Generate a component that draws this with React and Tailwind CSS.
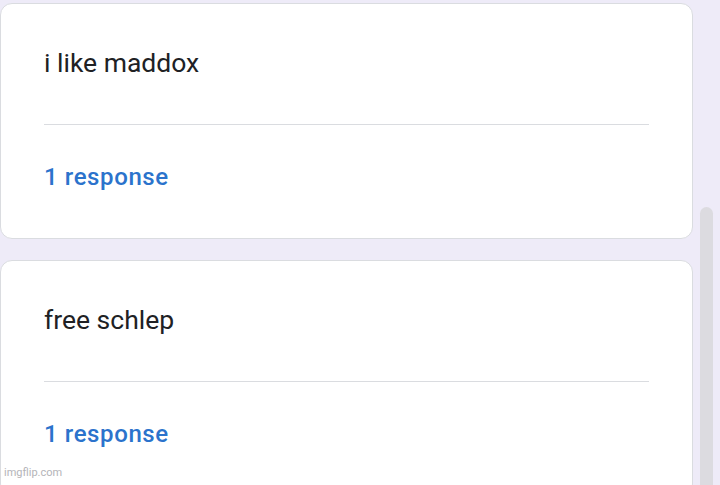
const questions = [
  { title: "i like maddox", responses: "1 response" },
  { title: "free schlep", responses: "1 response" },
];

function QuestionCard({ title, responses }) {
  return (
    <div className="shrink-0 rounded-[12px] border border-[#dadce0] bg-white px-[43px] pt-[43px] pb-[45px]">
      <div
        className="text-[26.5px] leading-[32px] text-[#202124]"
        style={{ fontFamily: "Roboto, sans-serif" }}
      >
        {title}
      </div>
      <div className="mt-[45px] h-px bg-[#dadce0]" />
      <div
        className="mt-[36px] text-[24px] font-medium leading-[32px] tracking-[0.6px] text-[#2b73cc]"
        style={{ fontFamily: "Roboto, sans-serif" }}
      >
        {responses}
      </div>
    </div>
  );
}

export default function App() {
  return (
    <div className="relative flex h-[485px] w-[720px] overflow-hidden bg-[#eeebf8]">
      <div className="flex w-[693px] flex-col gap-[21px] pt-[3px]">
        {questions.map((q) => (
          <QuestionCard key={q.title} {...q} />
        ))}
      </div>
      <div className="ml-[7px] flex w-[13px] flex-col pt-[207px]">
        <div className="flex-1 rounded-t-full bg-[#dcdbe0]" />
      </div>
      <div
        className="absolute bottom-[4px] left-[4px] text-[11px] text-[#b4b4b8]"
        style={{ fontFamily: "Roboto, sans-serif" }}
      >
        imgflip.com
      </div>
    </div>
  );
}
